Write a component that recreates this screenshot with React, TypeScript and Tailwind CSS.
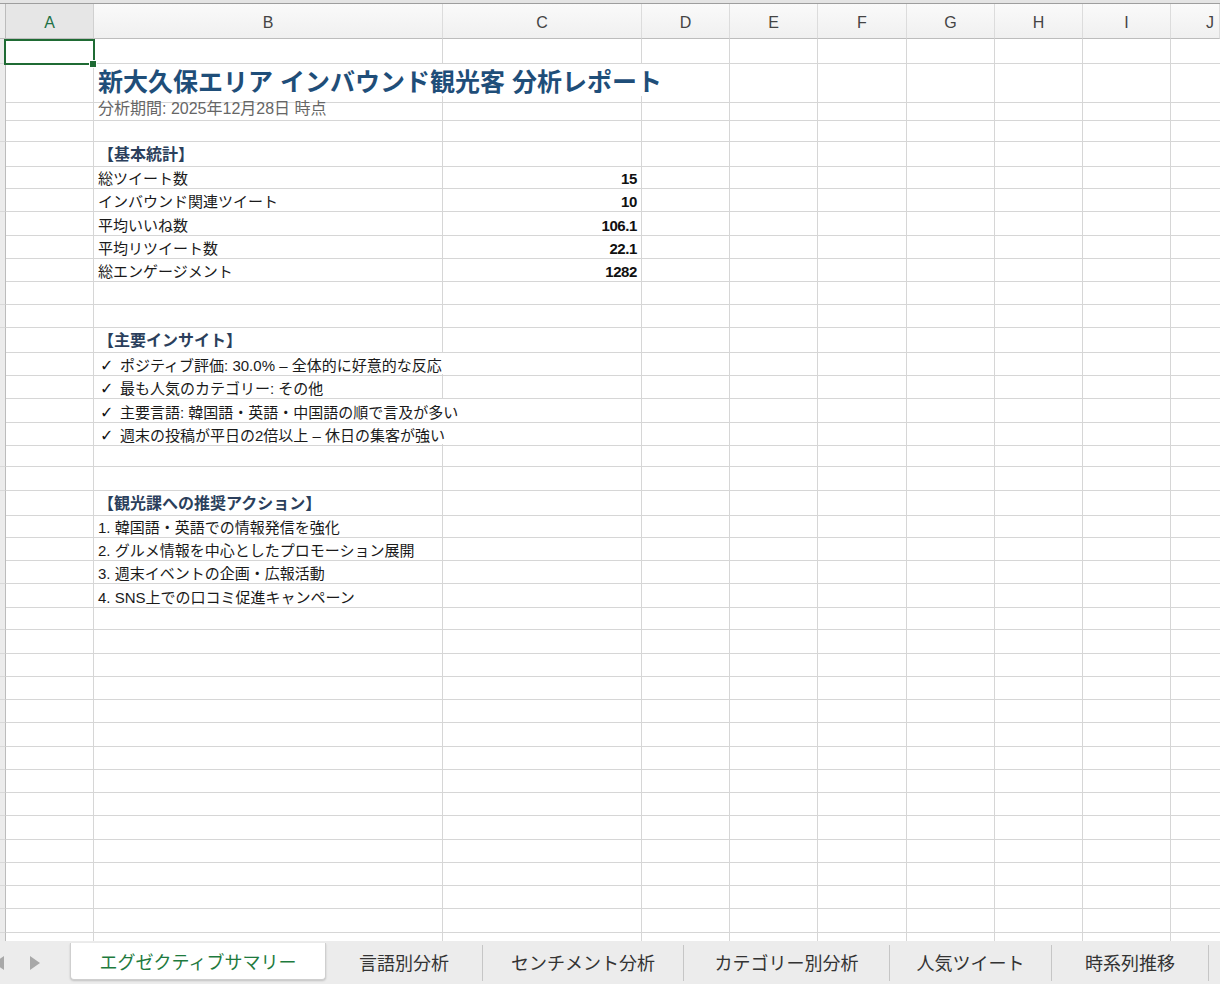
import React from 'react';

const FONT = "font-['Liberation_Sans','Noto_Sans_CJK_JP',sans-serif]";

const COLS = 'grid grid-cols-[6px_88px_349px_199px_88px_88px_89px_88px_88px_88px_49px]';
const LETTERS = ['A', 'B', 'C', 'D', 'E', 'F', 'G', 'H', 'I', 'J'];

const HEIGHT_CLASS: Record<number, string> = {
  22: 'h-[22px]',
  23: 'h-[23px]',
  24: 'h-[24px]',
  25: 'h-[25px]',
  32: 'h-[32px]',
};

// row tops measured from the sheet (px from top of the page)
const ROW_TOPS = [
  39, 64, 96, 119, 142, 165, 188, 212, 235, 258, 281, 305, 328, 351, 374, 398, 421, 444, 467, 491,
  514, 537, 560, 584, 607, 630, 654, 677, 700, 723, 747, 770, 793, 816, 840, 863, 886, 909, 933, 956,
];

type Kind = 'title' | 'sub' | 'section' | 'text' | 'check';

interface RowData {
  b?: string;
  kind?: Kind;
  c?: string;
  spill?: number; // how many cells the text runs across
}

const DATA: Record<number, RowData> = {
  1: { b: '新大久保エリア インバウンド観光客 分析レポート', kind: 'title', spill: 3 },
  2: { b: '分析期間: 2025年12月28日 時点', kind: 'sub' },
  4: { b: '【基本統計】', kind: 'section' },
  5: { b: '総ツイート数', c: '15' },
  6: { b: 'インバウンド関連ツイート', c: '10' },
  7: { b: '平均いいね数', c: '106.1' },
  8: { b: '平均リツイート数', c: '22.1' },
  9: { b: '総エンゲージメント', c: '1282' },
  12: { b: '【主要インサイト】', kind: 'section' },
  13: { b: 'ポジティブ評価: 30.0% – 全体的に好意的な反応', kind: 'check', spill: 2 },
  14: { b: '最も人気のカテゴリー: その他', kind: 'check' },
  15: { b: '主要言語: 韓国語・英語・中国語の順で言及が多い', kind: 'check', spill: 2 },
  16: { b: '週末の投稿が平日の2倍以上 – 休日の集客が強い', kind: 'check', spill: 2 },
  19: { b: '【観光課への推奨アクション】', kind: 'section' },
  20: { b: '1. 韓国語・英語での情報発信を強化' },
  21: { b: '2. グルメ情報を中心としたプロモーション展開' },
  22: { b: '3. 週末イベントの企画・広報活動' },
  23: { b: '4. SNS上での口コミ促進キャンペーン' },
};

const textClass = (kind?: Kind) => {
  switch (kind) {
    case 'title':
      return 'text-[25px] font-bold text-[#1f4e79]';
    case 'sub':
      return 'text-[16px] text-[#666666] translate-y-[1px]';
    case 'section':
      return 'text-[16px] font-bold text-[#2b3f5c] translate-y-[1px]';
    default:
      return 'text-[15px] text-[#1a1a1a] translate-y-[3px]';
  }
};

const TABS = [
  { label: 'エグゼクティブサマリー', w: 'w-[256px]', active: true },
  { label: '言語別分析', w: 'w-[157px]' },
  { label: 'センチメント分析', w: 'w-[201px]' },
  { label: 'カテゴリー別分析', w: 'w-[206px]' },
  { label: '人気ツイート', w: 'w-[162px]' },
  { label: '時系列推移', w: 'w-[157px]' },
];

const SheetRow: React.FC<{ index: number; height: number }> = ({ index, height }) => {
  const d = DATA[index] || {};
  const spill = d.spill || 1;
  const hc = HEIGHT_CLASS[height] || 'h-[23px]';
  return (
    <div className={`${COLS} ${hc}`}>
      <div className="bg-[#ececec] border-r border-b border-r-[#bcbcbc] border-b-[#d9d9d9]" />
      <div className="border-r border-b border-[#d6d6d6]" />
      <div
        className={`relative z-10 flex items-center px-[4px] border-b border-[#d6d6d6] ${
          spill > 1 ? '' : 'border-r'
        }`}
      >
        {d.b && (
          <span className={`whitespace-nowrap flex items-center ${textClass(d.kind)}`}>
            {d.kind === 'check' && (
              <span className="inline-block w-[22px] pl-[2px] font-['DejaVu_Sans',sans-serif] text-[16px] font-bold text-[#111]">
                ✓
              </span>
            )}
            {d.b}
          </span>
        )}
      </div>
      <div
        className={`flex items-center justify-end px-[4px] border-b border-[#d6d6d6] ${
          spill > 2 ? '' : 'border-r'
        }`}
      >
        {d.c && (
          <span className="text-[15px] font-bold text-[#111] tracking-[-0.4px] translate-y-[3px]">
            {d.c}
          </span>
        )}
      </div>
      {LETTERS.slice(3).map((l, i) => (
        <div key={l} className={`border-b border-[#d6d6d6] ${i < 6 ? 'border-r' : ''}`} />
      ))}
    </div>
  );
};

const App: React.FC = () => {
  const heights = ROW_TOPS.slice(1).map((t, i) => t - ROW_TOPS[i]);

  return (
    <div className={`w-[1220px] h-[984px] bg-white overflow-hidden flex flex-col ${FONT}`}>
      <div className="relative h-[941px] overflow-hidden shrink-0">
        {/* top strip */}
        <div className="h-[3px] bg-[#e4e4e4]" />
        <div className="h-px bg-[#9e9e9e]" />

        {/* column header */}
        <div className={`${COLS} h-[35px]`}>
          <div className="bg-[#ececec] border-r border-b border-[#bcbcbc]" />
          {LETTERS.map((l) => (
            <div
              key={l}
              className={`flex items-center justify-center pt-[3px] text-[16px] border-b border-b-[#bdbdbd] ${
                l === 'A'
                  ? 'bg-[#e6e6e6] text-[#1e7145] border-r border-r-[#d0d0d0]'
                  : 'bg-gradient-to-b from-[#fafafa] to-[#f0f0f0] text-[#444] border-r border-r-[#dcdcdc]'
              }`}
            >
              {l === 'J' ? <span className="ml-[30px]">{l}</span> : l}
            </div>
          ))}
        </div>

        {/* rows */}
        {heights.map((h, i) => (
          <SheetRow key={i} index={i} height={h} />
        ))}

        {/* active cell A1 */}
        <div className="absolute left-[4px] top-[39px] w-[91px] h-[26px] border-2 border-[#1f6b34] z-20" />
        <div className="absolute left-[89px] top-[60px] w-[8px] h-[8px] bg-[#1f6b34] border border-white z-30" />
      </div>

      {/* sheet tabs */}
      <div className="flex-1 bg-[#ececec] flex items-start">
        <div className="w-[70px] h-full flex items-center gap-[24px] shrink-0">
          <svg width="12" height="16" viewBox="0 0 12 16" className="-ml-[7px]">
            <path d="M11 1 L1 8 L11 15 Z" fill="#a8a8a8" />
          </svg>
          <svg width="12" height="16" viewBox="0 0 12 16">
            <path d="M1 1 L11 8 L1 15 Z" fill="#a8a8a8" />
          </svg>
        </div>
        {TABS.map((t) =>
          t.active ? (
            <div
              key={t.label}
              className={`${t.w} h-[37px] mt-[2px] shrink-0 bg-white border border-[#cfcfcf] border-t-0 rounded-b-[4px] shadow-[0_1px_2px_rgba(0,0,0,0.18)] flex items-center justify-center pt-[4px] text-[18px] text-[#1e7a3e]`}
            >
              {t.label}
            </div>
          ) : (
            <div key={t.label} className={`${t.w} h-full shrink-0 flex items-center`}>
              <div className="flex-1 text-center pt-[3px] text-[18px] text-[#333]">{t.label}</div>
              <div className="w-px h-[36px] bg-[#c6c6c6]" />
            </div>
          ),
        )}
      </div>
    </div>
  );
};

export default App;
